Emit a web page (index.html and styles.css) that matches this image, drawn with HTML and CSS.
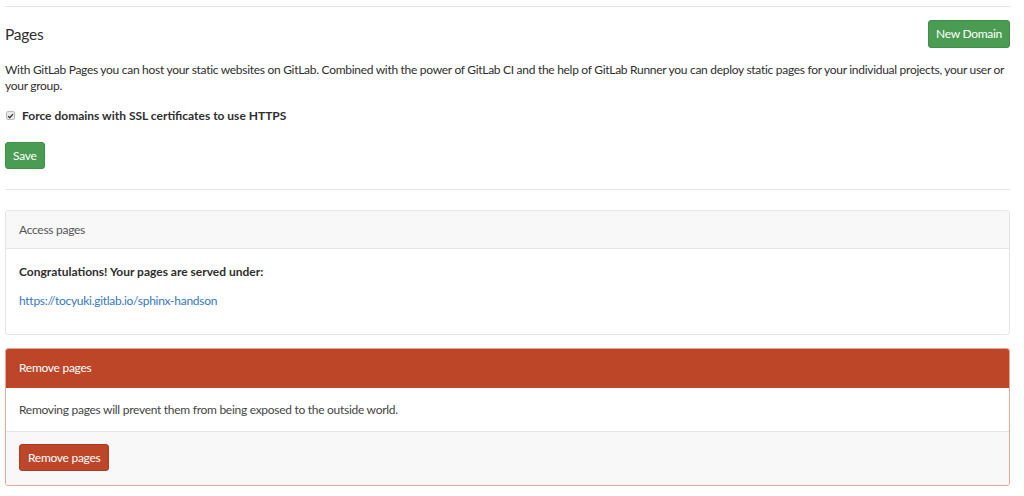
FILE: index.html
```html
<!DOCTYPE html>
<html>
<head>
<meta charset="utf-8">
<link rel="stylesheet" href="styles.css">
</head>
<body>
<div class="page">
  <div class="top-rule"></div>
  <div class="title-row">
    <h3 class="title">Pages</h3>
    <button class="btn btn-green">New Domain</button>
  </div>
  <p class="intro">With GitLab Pages you can host your static websites on GitLab. Combined with the power of GitLab CI and the help of GitLab Runner you can deploy static pages for your individual projects, your user or your group.</p>
  <label class="check">
    <span class="box"><svg width="8" height="8" viewBox="0 0 8 8"><path d="M1.2 4.2 L3.1 6 L6.8 1.8" fill="none" stroke="#333" stroke-width="1.4"/></svg></span>
    <span>Force domains with SSL certificates to use HTTPS</span>
  </label>
  <div class="save-row"><button class="btn btn-green btn-save">Save</button></div>
  <div class="rule"></div>

  <div class="panel">
    <div class="panel-head">Access pages</div>
    <div class="panel-body">
      <p class="strong">Congratulations! Your pages are served under:</p>
      <p class="link-line"><a href="#">https://tocyuki.gitlab.io/sphinx-handson</a></p>
    </div>
  </div>

  <div class="panel panel-danger">
    <div class="panel-head">Remove pages</div>
    <div class="panel-body"><p>Removing pages will prevent them from being exposed to the outside world.</p></div>
    <div class="panel-foot"><button class="btn btn-red">Remove pages</button></div>
  </div>
</div>
</body>
</html>
```
FILE: styles.css
```css
* { box-sizing: border-box; }
html, body { margin: 0; background: #fff; }
body {
  font-family: Lato, "Open Sans", sans-serif;
  font-size: 12px;
  line-height: 16px;
  letter-spacing: -0.28px;
  color: #2e2e2e;
}
.page {
  width: 1005px;
  margin-left: 5px;
  padding-top: 6px;
}
.top-rule, .rule {
  height: 1px;
  background: #e5e5e5;
}
.title-row {
  display: flex;
  justify-content: space-between;
  align-items: center;
  margin-top: 13px;
  height: 28px;
}
.title {
  margin: 0;
  font-size: 15.5px;
  font-weight: 400;
  letter-spacing: -0.2px;
  color: #2e2e2e;
}
.btn {
  font-family: inherit;
  font-size: 12px;
  letter-spacing: -0.28px;
  border-radius: 3px;
  color: #fff;
  cursor: pointer;
  line-height: 16px;
}
.btn-green {
  background: #4a9c52;
  border: 1px solid #3f9047;
  padding: 5px 7px;
  height: 28px;
}
.intro {
  margin: 14px 0 0;
  line-height: 16px;
  letter-spacing: -0.29px;
  color: #2e2e2e;
}
.check {
  display: flex;
  align-items: center;
  gap: 7px;
  margin-top: 13px;
  height: 17px;
  font-weight: 700;
  letter-spacing: 0;
  color: #2e2e2e;
}
.box {
  width: 9px;
  height: 9px;
  margin-left: 1px;
  border: 1px solid #bbb;
  border-radius: 2px;
  background: #e9e9e9;
  display: flex;
  align-items: center;
  justify-content: center;
}
.save-row { margin-top: 18px; height: 27px; }
.btn-save { padding: 4px 7px; height: 27px; }
.rule { margin-top: 20px; }
.panel {
  margin-top: 20px;
  border: 1px solid #e5e5e5;
  border-radius: 3px;
  overflow: hidden;
}
.panel-head {
  background: #f8f8f8;
  border-bottom: 1px solid #e5e5e5;
  height: 38px;
  padding: 0 13px;
  display: flex;
  align-items: center;
  color: #555;
}
.panel-body { padding: 14px 13px 15px; }
.panel-body p { margin: 0; line-height: 17px; }
.strong { font-weight: 700; letter-spacing: 0; }
.link-line { margin-top: 12px !important; }
.link-line a { color: #3777c0; text-decoration: none; }
.panel-body .link-line { padding-bottom: 10px; }
.panel-danger {
  margin-top: 13px;
  border-color: #e8a598;
}
.panel-danger .panel-head {
  background: #bd4629;
  border-bottom-color: #bd4629;
  color: #fff;
  margin: -1px -1px 0;
  padding-left: 14px;
  height: 40px;
}
.panel-danger .panel-body { padding: 13px 13px 13px; color: #444; }
.panel-foot {
  background: #f8f8f8;
  border-top: 1px solid #e5e5e5;
  padding: 12px 13px 14px;
}
.btn-red {
  background: #bd4629;
  border: 1px solid #a93d23;
  padding: 4px 8px;
  height: 27px;
}
```
